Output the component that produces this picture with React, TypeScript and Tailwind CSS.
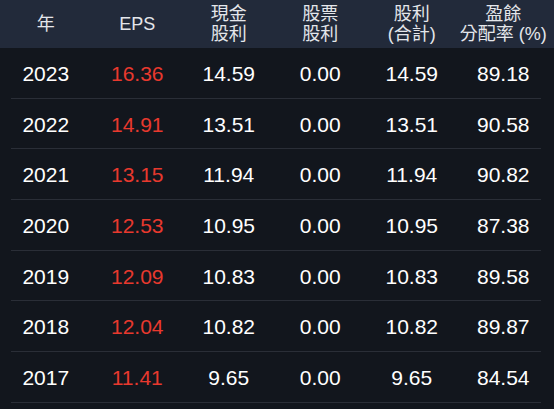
const rows = [
  ["2023", "16.36", "14.59", "0.00", "14.59", "89.18"],
  ["2022", "14.91", "13.51", "0.00", "13.51", "90.58"],
  ["2021", "13.15", "11.94", "0.00", "11.94", "90.82"],
  ["2020", "12.53", "10.95", "0.00", "10.95", "87.38"],
  ["2019", "12.09", "10.83", "0.00", "10.83", "89.58"],
  ["2018", "12.04", "10.82", "0.00", "10.82", "89.87"],
  ["2017", "11.41", "9.65", "0.00", "9.65", "84.54"],
];

const headers: string[][] = [
  ["年"],
  ["EPS"],
  ["現金", "股利"],
  ["股票", "股利"],
  ["股利", "(合計)"],
  ["盈餘", "分配率 (%)"],
];

export default function App() {
  return (
    <div
      className="w-[554px] h-[409px] overflow-hidden bg-[#12161d]"
      style={{ fontFamily: '"Liberation Sans", "Noto Sans CJK TC", sans-serif' }}
    >
      {/* header */}
      <div className="h-[48px] bg-[#222a3a] pr-[5px] grid grid-cols-6 items-center">
        {headers.map((h, i) => (
          <div key={i} className="flex flex-col items-center text-[18px] leading-[20.5px] text-[#e4e6ea]">
            {h.map((line, j) => (
              <span key={j}>{line}</span>
            ))}
          </div>
        ))}
      </div>

      {/* rows */}
      <div className="flex flex-col">
        {rows.map((r) => (
          <div key={r[0]} className="h-[50.67px] flex flex-col">
            <div className="flex-1 pt-[2px] pr-[5px] grid grid-cols-6 items-center">
              {r.map((v, i) => (
                <div
                  key={i}
                  className={
                    "text-center text-[21px] " +
                    (i === 1 ? "text-[#e8392e]" : "text-white")
                  }
                >
                  {v}
                </div>
              ))}
            </div>
            <div className="ml-[11px] mr-[13px] h-px bg-[#2a2e37]" />
          </div>
        ))}
      </div>
    </div>
  );
}
